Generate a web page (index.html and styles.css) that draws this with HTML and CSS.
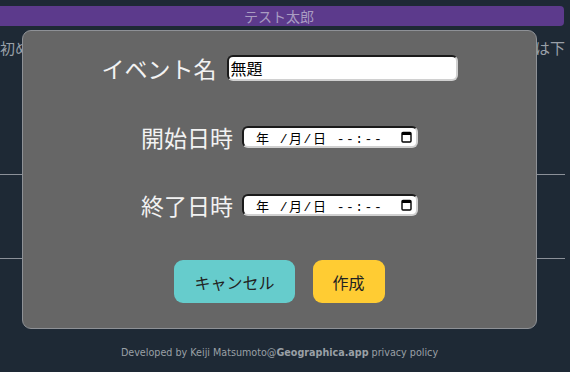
FILE: index.html
```html
<!DOCTYPE html>
<html lang="ja">
<head>
    <meta charset="UTF-8">
    <meta name="viewport" content="width=device-width, initial-scale=1.0">
    <title>イベント作成</title>
    <link rel="stylesheet" href="styles.css">
</head>
<body>
    <header class="user-bar">テスト太郎</header>

    <p class="notice">
        <span>初めての方はこちら</span>
        <span>使い方の説明は下</span>
    </p>

    <div class="list">
        <div class="list-item"></div>
        <div class="list-item"></div>
    </div>

    <footer>
        Developed by Keiji Matsumoto@<b>Geographica.app</b> privacy policy
    </footer>

    <!-- イベント作成ダイアログ -->
    <div class="modal">
        <div class="row row-name">
            <label for="eventName">イベント名</label>
            <input type="text" id="eventName" class="text-field" value="無題">
        </div>
        <div class="row row-start">
            <label>開始日時</label>
            <div class="date-field">
                <span class="date-text">年 /月/日 --:--</span>
                <svg class="cal" width="11" height="12" viewBox="0 0 11 12">
                    <rect x="1" y="1.5" width="9" height="9.5" rx="1" fill="none" stroke="#000" stroke-width="1.4"/>
                    <rect x="1" y="1.5" width="9" height="2.5" fill="#000"/>
                </svg>
            </div>
        </div>
        <div class="row row-end">
            <label>終了日時</label>
            <div class="date-field">
                <span class="date-text">年 /月/日 --:--</span>
                <svg class="cal" width="11" height="12" viewBox="0 0 11 12">
                    <rect x="1" y="1.5" width="9" height="9.5" rx="1" fill="none" stroke="#000" stroke-width="1.4"/>
                    <rect x="1" y="1.5" width="9" height="2.5" fill="#000"/>
                </svg>
            </div>
        </div>
        <div class="row buttons">
            <button class="btn btn-cancel">キャンセル</button>
            <button class="btn btn-create">作成</button>
        </div>
    </div>
</body>
</html>
```

FILE: styles.css
```css
/* ページ全体 */
body {
    margin: 0;
    background: #1e2935;
    font-family: "Noto Sans CJK JP", "Noto Sans", sans-serif;
    overflow: hidden;
}

/* ユーザー名のバー */
.user-bar {
    margin: 6px 6px 0 -6px;
    height: 20px;
    line-height: 20px;
    background: #5c3a8c;
    border-radius: 4px;
    color: #a99cc2;
    font-size: 14px;
    text-align: center;
}

.notice {
    margin: 12px 5px 0 0;
    height: 20px;
    line-height: 20px;
    font-size: 15px;
    color: #9aa0a8;
    white-space: nowrap;
    display: flex;
    justify-content: space-between;
}

.list {
    margin: 116px 5px 0 0;
}

.list-item {
    height: 83px;
    border-top: 1px solid #8b9098;
}

footer {
    margin-top: 4px;
    padding-right: 11px;
    line-height: 14px;
    text-align: center;
    font-family: "DejaVu Sans", Verdana, sans-serif;
    font-size: 9.6px;
    color: #9aa0a6;
}

/* ダイアログ */
.modal {
    position: absolute;
    left: 22px;
    top: 30px;
    width: 515px;
    height: 299px;
    box-sizing: border-box;
    background: #666;
    border: 1px solid #8e9196;
    border-radius: 9px;
    padding-top: 24px;
    display: flex;
    flex-direction: column;
    align-items: center;
}

.row {
    display: flex;
    align-items: center;
    justify-content: center;
    gap: 9px;
}

.row label {
    font-size: 23px;
    color: #f2f2f2;
    line-height: 26px;
}

.row-name {
    height: 26px;
    gap: 10px;
}

.row-start {
    height: 22px;
    margin-top: 45px;
}

.row-end {
    height: 22px;
    margin-top: 46px;
}

.text-field {
    width: 231px;
    height: 26px;
    box-sizing: border-box;
    margin: 0;
    padding: 0 2px;
    border: 2px solid;
    border-color: #1a1a1a #d0d0d0 #d0d0d0 #1a1a1a;
    border-radius: 6px;
    background: #fff;
    font-family: "Noto Sans CJK JP", sans-serif;
    font-size: 16px;
    color: #000;
    outline: none;
}

.date-field {
    width: 176px;
    height: 22px;
    box-sizing: border-box;
    border: 2px solid;
    border-color: #1a1a1a #d0d0d0 #d0d0d0 #1a1a1a;
    border-radius: 6px;
    background: #fff;
    display: flex;
    align-items: center;
    padding: 0 4px 0 12px;
}

.date-text {
    flex: 1;
    font-family: "Liberation Mono", "Noto Sans CJK JP", monospace;
    font-size: 13px;
    letter-spacing: 1.5px;
    color: #000;
    white-space: pre;
}

.cal {
    display: block;
}

.buttons {
    margin-top: 44px;
    gap: 18px;
}

.btn {
    height: 43px;
    padding: 0 20px;
    border: none;
    border-radius: 9px;
    font-family: "Noto Sans CJK JP", sans-serif;
    font-size: 16px;
    color: #222;
    cursor: pointer;
}

.btn-cancel {
    background: #66cccc;
}

.btn-create {
    background: #ffcc33;
}
```
